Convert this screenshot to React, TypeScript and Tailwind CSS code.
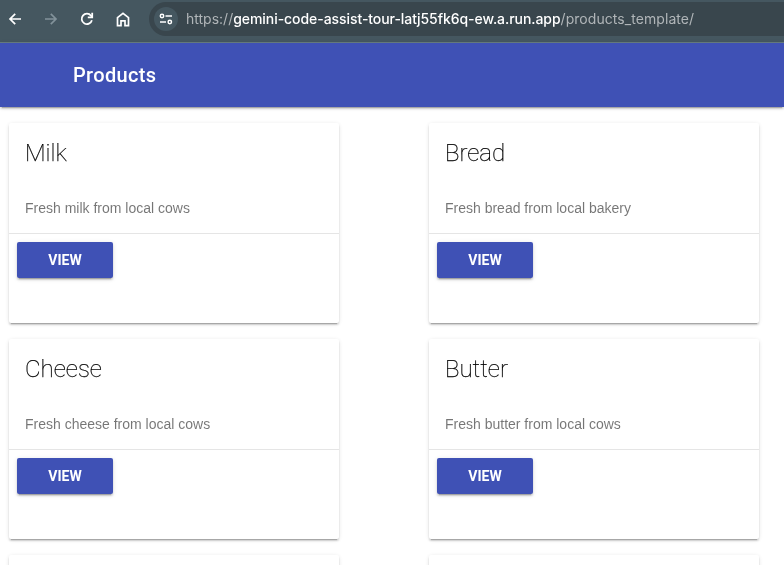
type Product = { name: string; description: string };

const products: Product[] = [
  { name: 'Milk', description: 'Fresh milk from local cows' },
  { name: 'Bread', description: 'Fresh bread from local bakery' },
  { name: 'Cheese', description: 'Fresh cheese from local cows' },
  { name: 'Butter', description: 'Fresh butter from local cows' },
];

const shadow =
  'shadow-[0_2px_2px_0_rgba(0,0,0,0.14),0_3px_1px_-2px_rgba(0,0,0,0.2),0_1px_5px_0_rgba(0,0,0,0.12)]';

function BackIcon() {
  return (
    <svg width="14" height="14" viewBox="0 0 14 14" fill="none" stroke="#fff" strokeWidth="1.7">
      <path d="M13 7H2.2M7.2 1.8L2 7l5.2 5.2" />
    </svg>
  );
}

function ForwardIcon() {
  return (
    <svg width="14" height="14" viewBox="0 0 14 14" fill="none" stroke="#82929a" strokeWidth="1.7">
      <path d="M1 7h10.8M6.8 1.8L12 7l-5.2 5.2" />
    </svg>
  );
}

function ReloadIcon() {
  return (
    <svg width="14" height="14" viewBox="0 0 14 14" fill="none" stroke="#fff" strokeWidth="1.8">
      <path d="M11.9 8.3A5.2 5.2 0 1 1 11 3.7L12.2 5" />
      <path d="M12.2 0.8V5.3H7.8" />
    </svg>
  );
}

function HomeIcon() {
  return (
    <svg width="14" height="15" viewBox="0 0 14 15" fill="none" stroke="#fff" strokeWidth="1.7">
      <path d="M1.5 5.6L7 1.3l5.5 4.3v8.1H9V8.8H5v4.9H1.5z" />
    </svg>
  );
}

function TuneIcon() {
  return (
    <svg width="14" height="12" viewBox="0 0 14 12" fill="none" stroke="#fff" strokeWidth="1.5">
      <circle cx="3" cy="3" r="1.7" />
      <path d="M6.5 3H13M1 9h6" />
      <circle cx="10.8" cy="9" r="1.7" />
    </svg>
  );
}

function BrowserBar() {
  return (
    <div className="flex h-[43px] shrink-0 items-start border-b border-[#687d80] bg-[#455760]">
      <div className="flex h-[38px] w-[149px] shrink-0 items-center pl-2">
        <BackIcon />
        <div className="ml-[22px] flex"><ForwardIcon /></div>
        <div className="ml-[22px] flex"><ReloadIcon /></div>
        <div className="ml-[22px] flex"><HomeIcon /></div>
      </div>
      <div className="mt-[2px] flex h-[34px] flex-1 items-center rounded-l-full bg-[#39464d] pl-[5px]">
        <div className="flex size-6 shrink-0 items-center justify-center rounded-full bg-[#455760]">
          <TuneIcon />
        </div>
        <div className="ml-2 whitespace-nowrap font-['Inter',sans-serif] text-[14px] leading-5 text-[#b0b5b8]">
          <span>https://</span>
          <span className="font-medium tracking-[-0.06px] text-white">gemini-code-assist-tour-latj55fk6q-ew.a.run.app</span>
          <span className="tracking-[0.06px]">/products_template/</span>
        </div>
      </div>
    </div>
  );
}

function Card({ product }: { product?: Product }) {
  return (
    <div className={`flex h-[200px] w-[330px] flex-col rounded-[2px] bg-white ${shadow}`}>
      {product && (
        <>
          <div className="p-4">
            <h2 className="font-['Roboto',sans-serif] text-[24px] leading-[28px] font-thin text-black [-webkit-text-stroke:0.25px_#000]">{product.name}</h2>
          </div>
          <div className="h-[50px] px-4 pt-4 font-['Liberation_Sans',sans-serif] text-[14px] leading-[18px] whitespace-nowrap text-black/54">
            {product.description}
          </div>
          <div className="border-t border-black/10 p-2">
            <button
              className={`block h-9 w-24 rounded-[2px] bg-[#3f51b5] font-['Roboto',sans-serif] text-[14px] leading-9 font-bold text-white ${shadow}`}
            >
              VIEW
            </button>
          </div>
        </>
      )}
    </div>
  );
}

export default function App() {
  return (
    <div className="h-[565px] w-[784px] overflow-hidden bg-white">
      <div className="flex flex-col opacity-[0.999] will-change-[opacity]">
        <BrowserBar />
        <header className={`flex h-16 shrink-0 items-center bg-[#3f51b5] pl-[73px] ${shadow}`}>
          <h1 className="font-['Roboto',sans-serif] text-[20px] leading-5 font-medium tracking-[0.35px] text-white">Products</h1>
        </header>
        <main className="grid grid-cols-[330px_330px] gap-x-[90px] gap-y-4 pt-4 pl-[9px]">
          {products.map((product) => (
            <Card key={product.name} product={product} />
          ))}
          <Card />
          <Card />
        </main>
      </div>
    </div>
  );
}
